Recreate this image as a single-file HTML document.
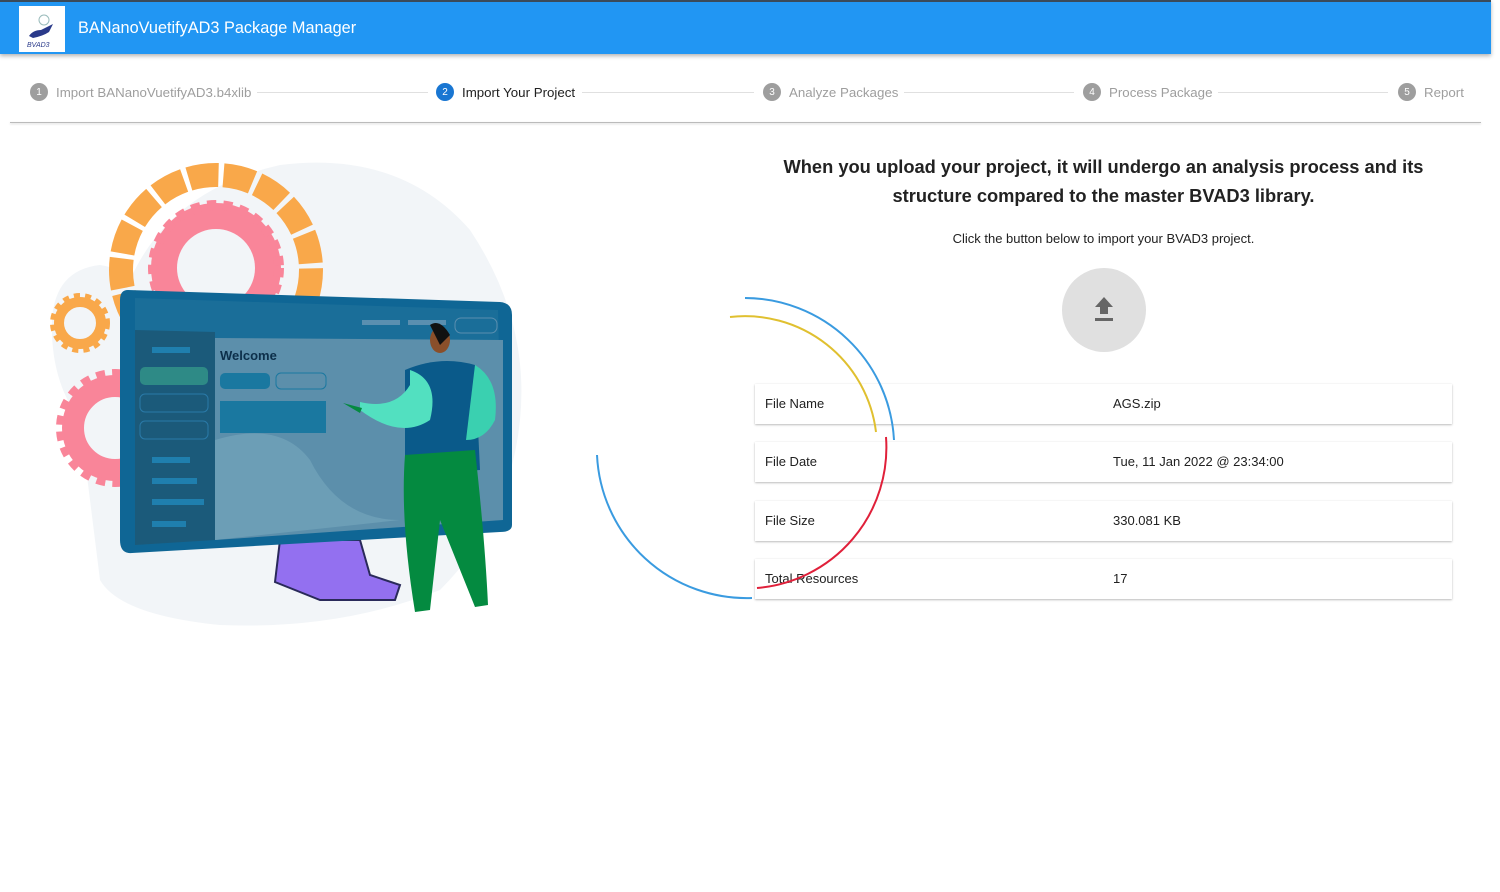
<!DOCTYPE html>
<html><head><meta charset="utf-8"><style>
*{box-sizing:border-box;margin:0;padding:0}
body{width:1500px;height:892px;background:#fff;font-family:"Liberation Sans",Roboto,sans-serif;position:relative;overflow:hidden;color:#212121}
.hdr{position:absolute;left:0;top:0;width:1491px;height:54px;background:#2196f3;border-top:2px solid #3a4a5a;box-shadow:0 2px 4px rgba(0,0,0,.3)}
.logo{position:absolute;left:19px;top:4px;width:46px;height:46px;background:#fff}
.title{position:absolute;left:78px;top:17px;color:#fff;font-size:16.3px}
.step{position:absolute;top:83px;font-size:13.3px;color:#9e9e9e;display:flex;align-items:center;background:#fff;padding-right:6px}
.num{width:18px;height:18px;border-radius:50%;background:#9e9e9e;color:#fff;font-size:10px;display:flex;align-items:center;justify-content:center;margin-right:8px}
.line{position:absolute;top:92px;height:1px;background:#e0e0e0}
.sep{position:absolute;left:10px;top:122px;width:1471px;height:1px;background:#bbb;box-shadow:0 1px 2px rgba(0,0,0,.2)}
h2{position:absolute;left:770px;width:667px;top:152px;text-align:center;font-size:18.3px;line-height:29px;font-weight:bold;color:#222}
.sub{position:absolute;left:770px;width:667px;top:231px;text-align:center;font-size:13px}
.up{position:absolute;left:1062px;top:268px;width:84px;height:84px;border-radius:50%;background:#e0e0e0}
.row{position:absolute;left:755px;width:697px;height:40px;background:#fff;box-shadow:0 1px 2px rgba(0,0,0,.25),0 0 1px rgba(0,0,0,.08);font-size:13px}
.row span{position:absolute;top:12px}
</style></head><body>
<div class="hdr"><div class="logo"><svg width="46" height="46"><circle cx="25" cy="14" r="5" fill="none" stroke="#9bb" stroke-width="1"/><path d="M10 30 Q14 24 22 24 L34 18 L30 26 Q24 30 14 32Z" fill="#2a3a8a"/><text x="8" y="41" font-size="7" font-style="italic" fill="#2a3a8a" font-family="Liberation Sans">BVAD3</text></svg></div><div class="title">BANanoVuetifyAD3 Package Manager</div></div>

<div class="line" style="left:256px;width:172px"></div>
<div class="line" style="left:582px;width:172px"></div>
<div class="line" style="left:902px;width:172px"></div>
<div class="line" style="left:1216px;width:172px"></div>
<div class="step" style="left:30px"><div class="num">1</div>Import BANanoVuetifyAD3.b4xlib</div>
<div class="step" style="left:436px;color:#212121"><div class="num" style="background:#1976d2">2</div>Import Your Project</div>
<div class="step" style="left:763px"><div class="num">3</div>Analyze Packages</div>
<div class="step" style="left:1083px"><div class="num">4</div>Process Package</div>
<div class="step" style="left:1398px"><div class="num">5</div>Report</div>
<div class="sep"></div>

<svg style="position:absolute;left:0;top:0" width="760" height="892">
<path d="M100 580 Q90 500 80 420 Q50 380 52 320 Q55 270 100 265 Q120 268 130 280 Q170 190 280 165 Q400 150 470 230 Q530 320 520 420 Q510 520 440 590 Q340 630 220 625 Q120 615 100 580Z" fill="#f2f5f8"/>
<circle cx="216" cy="270" r="95" fill="none" stroke="#f9a84a" stroke-width="24" stroke-dasharray="30 5"/>
<circle cx="216" cy="268" r="52" fill="none" stroke="#f98599" stroke-width="26"/>
<circle cx="216" cy="268" r="63" fill="none" stroke="#f98599" stroke-width="10" stroke-dasharray="9 7"/>
<circle cx="80" cy="323" r="21" fill="none" stroke="#f9a84a" stroke-width="10"/>
<circle cx="80" cy="323" r="27" fill="none" stroke="#f9a84a" stroke-width="6" stroke-dasharray="6 5"/>
<circle cx="115" cy="428" r="42" fill="none" stroke="#f98599" stroke-width="22"/>
<circle cx="115" cy="428" r="55" fill="none" stroke="#f98599" stroke-width="8" stroke-dasharray="9 7"/>
<path d="M280 540 L360 540 L370 575 L400 585 L395 600 L320 600 L275 582Z" fill="#9370f0" stroke="#2a2a5a" stroke-width="2"/>
<path d="M128 290 L500 302 Q512 303 512 315 L512 525 Q512 532 500 532 L132 553 Q120 554 120 540 L120 300 Q120 290 128 290Z" fill="#0f6695"/>
<path d="M135 298 L498 310 L503 520 L135 545Z" fill="#1a6e99"/>
<path d="M215 338 L503 340 L503 520 L215 540Z" fill="#5c8fab"/>
<path d="M135 330 L215 332 L215 540 L135 545Z" fill="#1b5a7a"/>
<path d="M215 440 Q280 420 310 460 Q340 520 400 520 L215 540Z" fill="#6c9eb6"/>
<rect x="140" y="367" width="68" height="18" rx="5" fill="#2e8a86"/>
<rect x="140" y="394" width="68" height="18" rx="5" fill="none" stroke="#2a7aa8"/>
<rect x="140" y="421" width="68" height="18" rx="5" fill="none" stroke="#2a7aa8"/>
<rect x="220" y="373" width="50" height="16" rx="5" fill="#1a78a0"/>
<rect x="276" y="373" width="50" height="16" rx="5" fill="none" stroke="#1a78a0"/>
<rect x="220" y="401" width="106" height="32" fill="#1a78a0"/>
<rect x="152" y="347" width="38" height="6" fill="#1f7fae"/><rect x="152" y="457" width="38" height="6" fill="#1f7fae"/><rect x="152" y="478" width="45" height="6" fill="#1f7fae"/><rect x="152" y="499" width="52" height="6" fill="#1f7fae"/><rect x="152" y="521" width="34" height="6" fill="#1f7fae"/>
<rect x="362" y="320" width="38" height="5" fill="#5a8fb0"/><rect x="408" y="320" width="38" height="5" fill="#5a8fb0"/><rect x="455" y="318" width="42" height="15" rx="6" fill="none" stroke="#5a8fb0"/>
<text x="220" y="360" font-size="13" font-weight="bold" fill="#0c2f4a" font-family="Liberation Sans">Welcome</text>
<path d="M405 370 Q440 355 475 365 L480 470 L405 475Z" fill="#0a5a8a"/>
<path d="M410 370 Q440 380 430 420 Q400 440 360 410 L360 402 Q395 410 410 385Z" fill="#52e0c0"/>
<path d="M475 365 Q500 380 495 420 Q485 440 466 440Z" fill="#3ad0b0"/>
<path d="M405 455 L475 450 Q485 540 488 605 L475 607 L440 520 L430 610 L415 612 Q400 520 405 455Z" fill="#048a40"/>
<ellipse cx="440" cy="340" rx="10" ry="13" fill="#8a4f2a"/><path d="M430 325 Q440 318 450 335 L440 345Z" fill="#111"/>
<path d="M343 403 L362 408 L360 413Z" fill="#048a40"/>
</svg>

<h2>When you upload your project, it will undergo an analysis process and its structure compared to the master BVAD3 library.</h2>
<div class="sub">Click the button below to import your BVAD3 project.</div>
<div class="up"><svg width="84" height="84"><path d="M42 29 L51 39 L46 39 L46 46 L38 46 L38 39 L33 39Z M33 50 H51 V53 H33Z" fill="#666"/></svg></div>

<div class="row" style="top:384px"><span style="left:10px">File Name</span><span style="left:358px">AGS.zip</span></div>
<div class="row" style="top:442px"><span style="left:10px">File Date</span><span style="left:358px">Tue, 11 Jan 2022 @ 23:34:00</span></div>
<div class="row" style="top:501px"><span style="left:10px">File Size</span><span style="left:358px">330.081 KB</span></div>
<div class="row" style="top:559px"><span style="left:10px">Total Resources</span><span style="left:358px">17</span></div>
<svg style="position:absolute;left:0;top:0" width="1500" height="892">
<path d="M745 298 A150 150 0 0 1 894 440" fill="none" stroke="#3a9be0" stroke-width="2"/>
<path d="M597 455 A150 150 0 0 0 752 598" fill="none" stroke="#3a9be0" stroke-width="2"/>
<path d="M730 317 A132 132 0 0 1 876 432" fill="none" stroke="#e0c030" stroke-width="2"/>
<path d="M886 437 A141 141 0 0 1 757 588" fill="none" stroke="#e0203a" stroke-width="2"/>
</svg>
</body></html>
